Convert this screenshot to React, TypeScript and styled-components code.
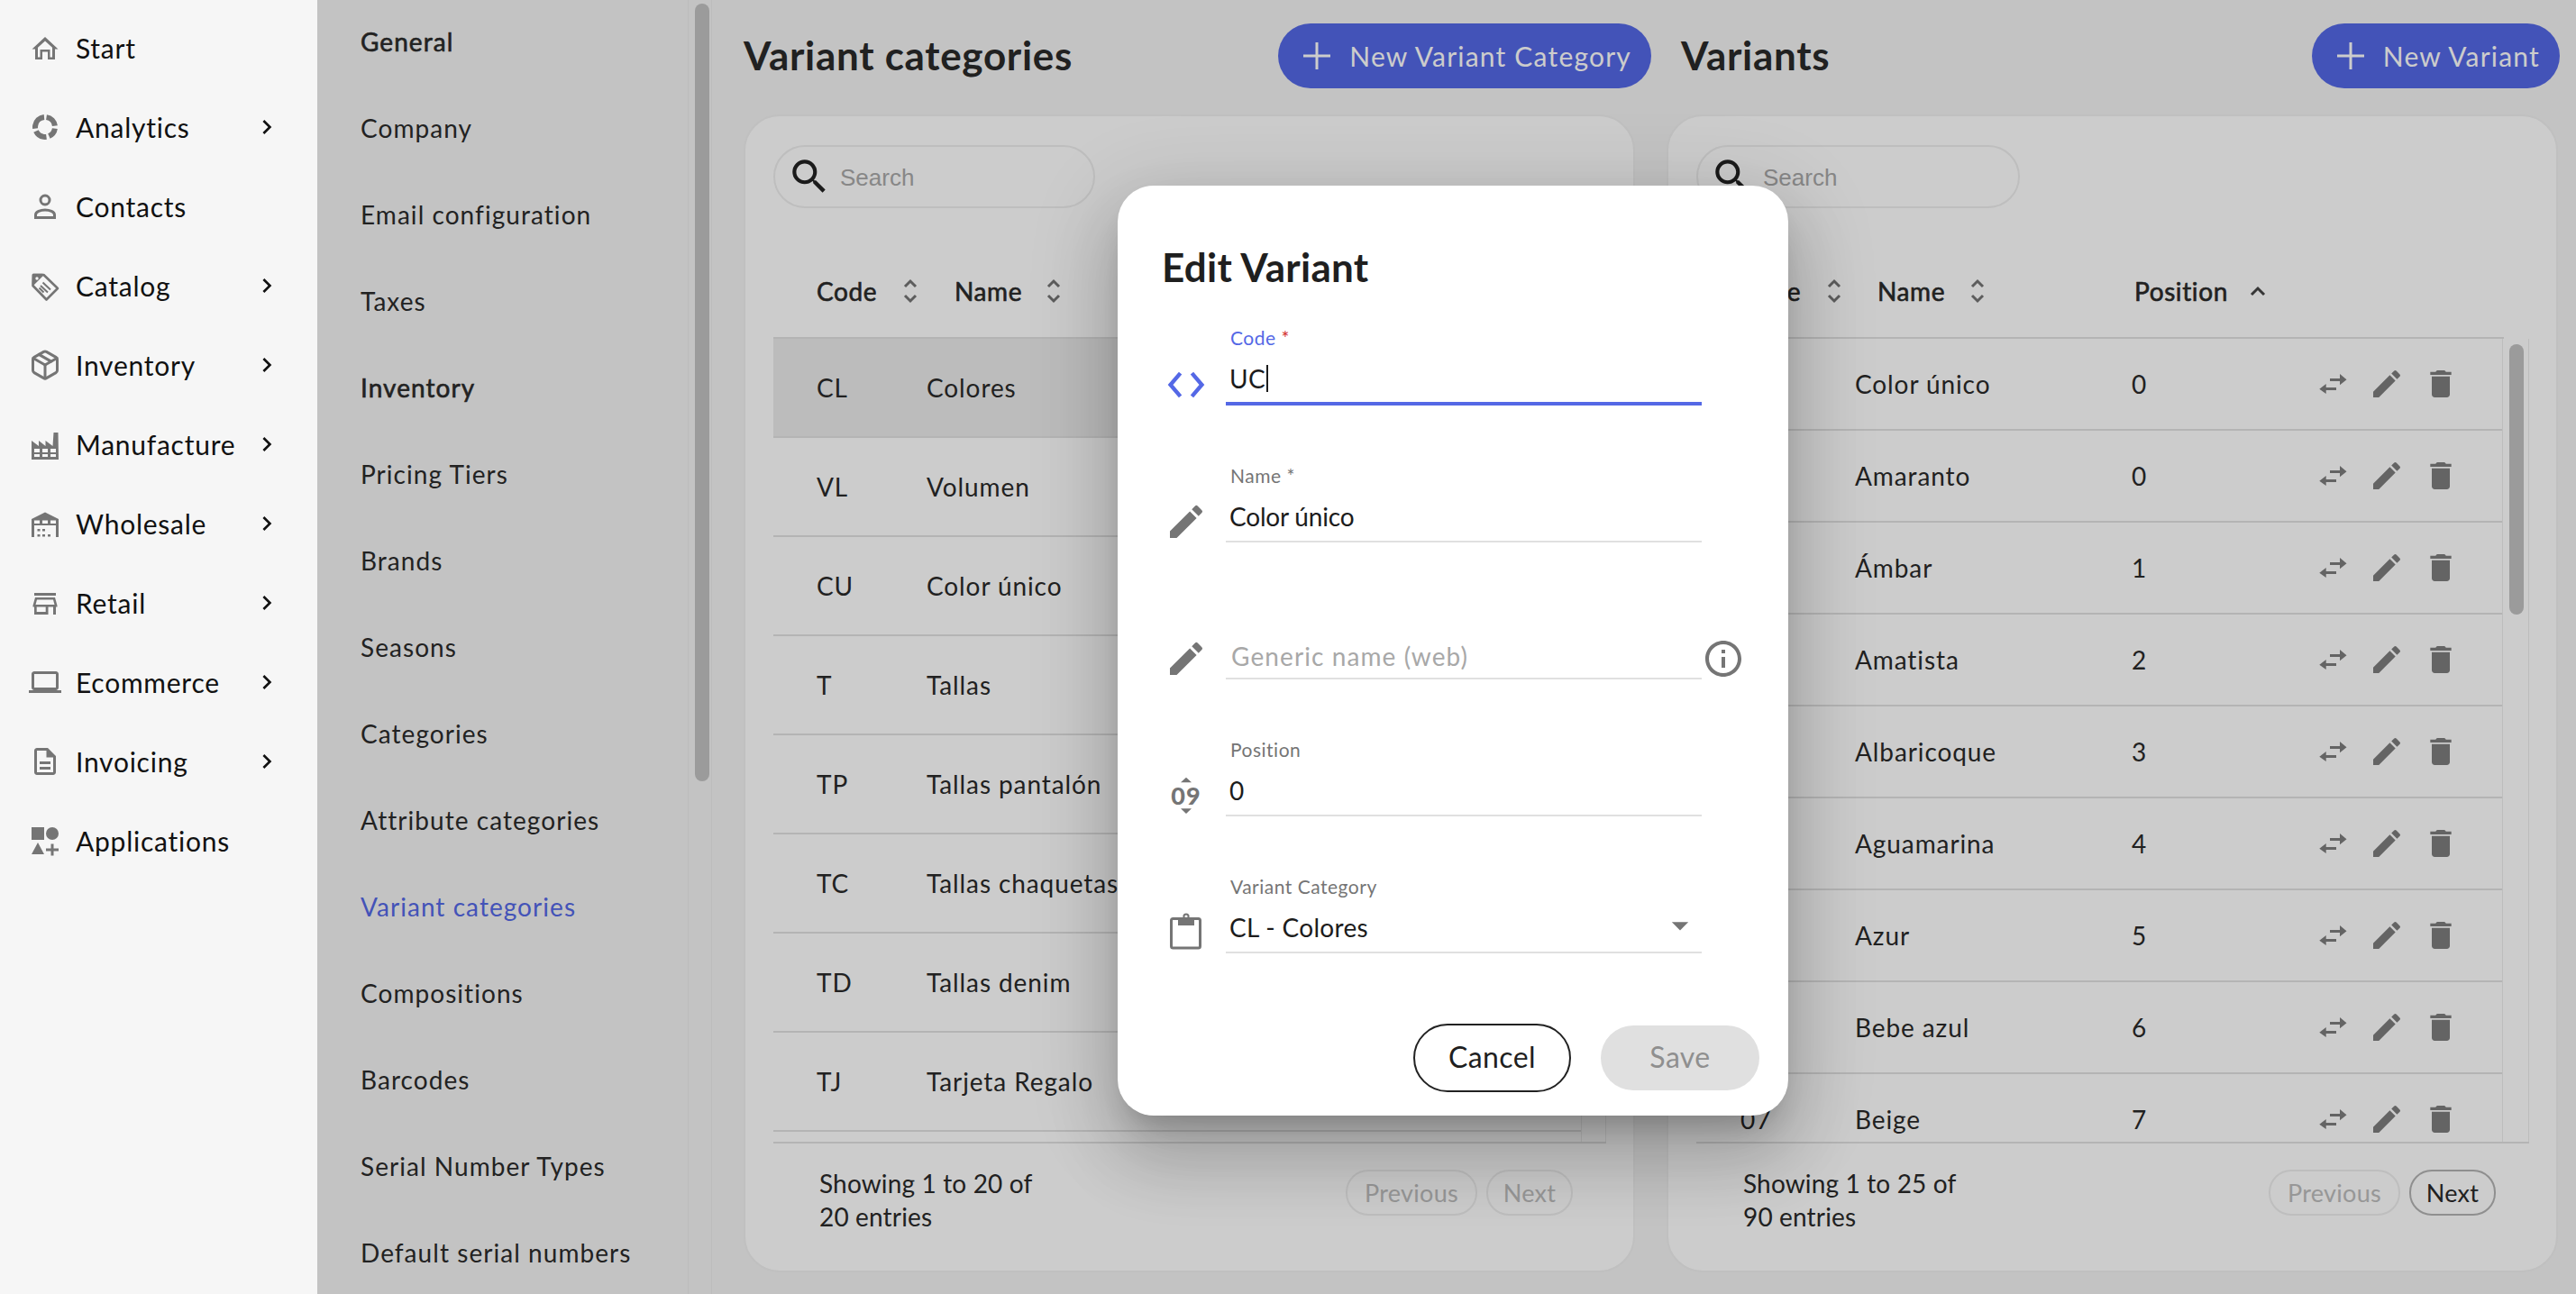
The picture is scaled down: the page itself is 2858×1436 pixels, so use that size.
import React from "react";
import styled, { createGlobalStyle } from "styled-components";
import {
  MdChevronRight, MdSearch, MdEdit, MdDelete, MdInfoOutline, MdOutlineLaptop, MdOutlineDescription, MdArrowDropDown,
} from "react-icons/md";
import { Package } from "lucide-react";

const FONT = `"Lato", "Noto Sans", sans-serif`;

const Global = createGlobalStyle`
  html, body { margin: 0; padding: 0; background: #f6f6f6; }
  * { box-sizing: border-box; }
  body { font-family: ${FONT}; overflow: hidden; }
`;

const Page = styled.div`
  position: relative; display: flex; width: 2858px; height: 1436px; overflow: hidden;
`;

const Sidebar = styled.nav`
  width: 352px; flex: none; padding: 9px 40px 0 32px; background: #f6f6f6;
  display: flex; flex-direction: column;
`;
const NavItem = styled.div`
  height: 88px; display: flex; align-items: center; gap: 16px; color: #111;
  font-size: 30px; letter-spacing: 0.75px;
  svg.lead { width: 36px; height: 36px; color: #757575; flex: none; }
`;
const NavChevron = styled(MdChevronRight)`
  margin-left: auto; width: 32px; height: 32px; color: #111; flex: none;
`;

const SettingsMenu = styled.div`
  width: 411px; flex: none; background: #f4f4f4; padding-left: 48px;
  display: flex; flex-direction: column; gap: 4px;
`;
const MenuItem = styled.div<{ $head?: boolean; $active?: boolean }>`
  height: 92px; display: flex; align-items: center; font-size: 28px; letter-spacing: 1.05px;
  -webkit-text-stroke: ${p => (p.$head ? "0.6px" : "0")} currentColor;
  color: ${p => (p.$active ? "#5468e6" : "#2b2b2b")};
`;
const PageScroll = styled.div`
  width: 27px; flex: none; padding: 4px 0 0 7px; background: #f4f4f4;
  border-left: 1px solid #ebebeb; border-right: 1px solid #ebebeb;
`;
const PageThumb = styled.div`
  width: 16px; height: 863px; border-radius: 8px; background: #c2c2c2;
`;

const Main = styled.main`
  flex: 1; background: #f4f4f4; padding: 26px 20px 0 35px; display: flex; gap: 35px;
`;
const Column = styled.section`
  width: 989px; flex: none; display: flex; flex-direction: column;
`;
const Heading = styled.header<{ $indent: number; $over: number }>`
  height: 72px; display: flex; align-items: center; justify-content: space-between;
  padding-left: ${p => p.$indent}px; margin-right: -${p => p.$over}px; margin-bottom: 29px;
`;
const Title = styled.h1`
  margin: -3px 0 0; font-size: 44px; font-weight: 700; color: #2a2a2a; letter-spacing: 0.7px;
`;
const PrimaryButton = styled.button`
  height: 72px; border: 0; border-radius: 36px; background: #5468e6; color: #fff;
  display: flex; align-items: center; font: 400 30px ${FONT}; letter-spacing: 1.2px;
  padding: 0 22px 0 28px; gap: 21px;
`;
const Card = styled.div`
  height: 1285px; background: #fff; border: 2px solid #f0f0f0; border-radius: 40px;
  padding: 32px 30px 0 31px;
`;
const SearchBox = styled.div<{ $w: number }>`
  width: ${p => p.$w}px; height: 70px; border: 2px solid #eee; border-radius: 35px;
  display: flex; align-items: center; padding-left: 13px; gap: 9px;
  font: 400 26px "Liberation Sans", Arial, sans-serif; color: #a9a9a9;
  svg { width: 50px; height: 50px; color: #222; flex: none; }
`;
const SearchHint = styled.span`
  padding-top: 3px;
`;
const TableHeader = styled.div<{ $left: number }>`
  display: flex; align-items: center; padding: 41px 0 1px ${p => p.$left}px;
  border-bottom: 2px solid #e2e2e2; box-sizing: content-box; height: 101px; margin-right: 28px;
`;
const HeaderCell = styled.div<{ $w: number; $label: number }>`
  width: ${p => p.$w}px; flex: none; display: grid; align-items: center;
  grid-template-columns: ${p => p.$label}px 16px;
  font-size: 28px; -webkit-text-stroke: 0.6px currentColor; color: #2a2a2a; letter-spacing: 0.6px;
`;
const TableBody = styled.div`
  height: 893px; display: flex; border-bottom: 2px solid #e2e2e2;
`;
const Rows = styled.div`
  flex: 1; overflow: hidden;
`;
const Row = styled.div<{ $h: number; $cols: string; $selected?: boolean; $left: number }>`
  height: ${p => p.$h}px; display: grid; align-items: center;
  grid-template-columns: ${p => p.$cols}; padding-left: ${p => p.$left}px;
  border-bottom: 2px solid #e2e2e2; font-size: 28px; letter-spacing: 0.9px; color: #2a2a2a;
  background: ${p => (p.$selected ? "#ececec" : "transparent")};
`;
const RowActions = styled.div`
  display: flex; gap: 20px; color: #7d7d7d;
  svg { width: 40px; height: 40px; flex: none; }
`;
const Track = styled.div<{ $w: number }>`
  width: ${p => p.$w}px; flex: none; border-left: 1px solid #ededed; border-right: 1px solid #ededed;
  padding: 6px 0 0 7px;
`;
const Thumb = styled.div`
  width: 16px; height: 300px; border-radius: 8px; background: #c2c2c2;
`;
const Footer = styled.footer<{ $left: number }>`
  display: flex; justify-content: space-between; padding: 28px 37px 0 ${p => p.$left}px;
`;
const FooterText = styled.div`
  width: 262px; margin-top: -2px; font-size: 28px; line-height: 37px; letter-spacing: 0.15px; color: #2a2a2a;
`;
const Pager = styled.div`
  display: flex; gap: 10px; margin-top: 1px;
`;
const PageButton = styled.button<{ $w: number; $on?: boolean }>`
  width: ${p => p.$w}px; height: 51px; border-radius: 25px; background: transparent; padding: 0;
  border: 2px solid ${p => (p.$on ? "#b3b3b3" : "#eeeeee")};
  color: ${p => (p.$on ? "#2a2a2a" : "#bdbdbd")};
  font: 400 27px ${FONT}; letter-spacing: 0.3px;
`;

const Overlay = styled.div`
  position: absolute; top: 0; bottom: 0; left: 352px; right: 0; background: rgba(0, 0, 0, 0.2);
`;
const Dialog = styled.div`
  position: absolute; left: 1240px; top: 206px; width: 744px; background: #fff; border-radius: 40px;
  padding: 67px 32px 26px 36px;
  box-shadow: 0 22px 30px -14px rgba(0,0,0,.2), 0 48px 76px 6px rgba(0,0,0,.14), 0 18px 92px 16px rgba(0,0,0,.12);
`;
const DialogTitle = styled.h2`
  margin: 0 0 0 13px; height: 48px; line-height: 47px; font-size: 44px; font-weight: 700;
  color: #1f1f1f; letter-spacing: 0.25px;
`;
const Fields = styled.div`
  display: flex; flex-direction: column; gap: 67px; margin-top: 43px;
`;
const Field = styled.div`
  display: grid; grid-template-columns: 80px 528px 40px; column-gap: 4px; align-items: end;
`;
const FieldIcon = styled.div<{ $focus?: boolean }>`
  height: 40px; margin-bottom: 3px; display: flex; align-items: center; justify-content: center;
  color: ${p => (p.$focus ? "#5468e6" : "#757575")};
  svg { width: 44px; height: 44px; flex: none; }
`;
const Pencil = styled(MdEdit)`
  && { width: 48px; height: 48px; }
`;
const InfoMark = styled(MdInfoOutline)`
  && { width: 48px; height: 48px; }
`;
const FieldBody = styled.div``;
const FieldLabel = styled.div<{ $focus?: boolean }>`
  height: 24px; line-height: 24px; margin: -1px 0 11px 5px; font-size: 21px; letter-spacing: 0.5px;
  color: ${p => (p.$focus ? "#5468e6" : "#757575")};
  i { font-style: normal; color: ${p => (p.$focus ? "#d32f2f" : "#757575")}; }
`;
const FieldValue = styled.div<{ $placeholder?: boolean; $track?: number }>`
  height: 44px; display: flex; align-items: center; padding: ${p => (p.$placeholder ? "6px 0 0 6px" : "0 0 0 4px")};
  font-size: 28px; letter-spacing: ${p => p.$track ?? 0.3}px; color: ${p => (p.$placeholder ? "#a8a8a8" : "#1c1c1c")};
  position: relative;
`;
const Caret = styled.span`
  display: inline-block; width: 2px; height: 30px; background: #1c1c1c; margin-left: 1px;
`;
const SelectArrow = styled(MdArrowDropDown)`
  position: absolute; right: 0; top: -2px; width: 48px; height: 44px; color: #757575;
`;
const FieldLine = styled.div<{ $focus?: boolean }>`
  height: ${p => (p.$focus ? 4 : 2)}px; margin-top: ${p => (p.$focus ? 4 : 5)}px;
  background: ${p => (p.$focus ? "#5468e6" : "#e0e0e0")};
`;
const Actions = styled.div`
  display: flex; justify-content: flex-end; align-items: center; gap: 33px; margin-top: 78px;
`;
const CancelButton = styled.button`
  width: 175px; height: 76px; border: 2px solid #222; border-radius: 38px; background: #fff;
  font: 400 32px ${FONT}; letter-spacing: 0.4px; color: #1f1f1f; padding: 0 0 3px;
`;
const SaveButton = styled.button`
  width: 176px; height: 72px; border: 0; border-radius: 36px; background: #e0e0e0;
  font: 400 32px ${FONT}; letter-spacing: 0.4px; color: #8f8f8f; padding: 0 0 3px;
`;

const Plus = () => (
  <svg width="30" height="30" viewBox="0 0 30 30" fill="none" stroke="currentColor" strokeWidth="3">
    <path d="M15 0 V30 M0 15 H30" />
  </svg>
);
const Sort = () => (
  <svg width="16" height="28" viewBox="0 0 16 28" fill="none" stroke="#757575" strokeWidth="3">
    <path d="M2 9 L8 3 L14 9" /><path d="M2 19 L8 25 L14 19" />
  </svg>
);
const SortUp = () => (
  <svg width="18" height="28" viewBox="0 0 18 28" fill="none" stroke="#444" strokeWidth="3">
    <path d="M2 18 L9 11 L16 18" />
  </svg>
);
const HomeIcon = () => (
  <svg className="lead" viewBox="0 0 36 36" fill="currentColor" fillRule="evenodd">
    <path d="M18 6 L3.5 19.5 H7 V31 H15 V22.5 H21 V31 H29 V19.5 H32.5 Z M18 10.5 L10 17.8 V28.5 H12.5 V20 H23.5 V28.5 H26 V17.8 Z" />
  </svg>
);
const Donut = () => (
  <svg className="lead" viewBox="0 0 36 36" fill="none" stroke="currentColor" strokeWidth="6">
    <circle cx="18" cy="18" r="11" strokeDasharray="14.3 3 11 3 14 3 17.8 3" transform="rotate(-82 18 18)" />
  </svg>
);
const PersonIcon = () => (
  <svg className="lead" viewBox="0 0 36 36" fill="none" stroke="currentColor" strokeWidth="3">
    <circle cx="18" cy="11" r="5" />
    <path d="M7.5 30.5 V27.5 C7.5 24 13 22 18 22 S28.5 24 28.5 27.5 V30.5 Z" />
  </svg>
);
const TagIcon = () => (
  <svg className="lead" viewBox="0 0 36 36" fill="none" stroke="currentColor" strokeWidth="2.6" strokeLinejoin="round">
    <path d="M5 6 H16.5 L32 21 L19.5 33.5 L4.5 18 Z" />
    <path d="M5 6 H15 L5 16 Z" fill="currentColor" />
    <circle cx="9" cy="10" r="1.7" fill="#f6f6f6" stroke="none" />
    <path d="M15.5 14.5 L24 22.5 M13 18 L21 25.5 M11.5 20.5 L16.5 25.5" strokeWidth="2" />
  </svg>
);
const FactoryIcon = () => (
  <svg className="lead" viewBox="0 0 36 36" fill="currentColor" fillRule="evenodd">
    <path d="M3 14 L11 20 V14 L18.5 20 V14 L26.5 20 L27.5 5 H32.5 L33 35 H3 Z M6 23 V27 H12 V23 Z M15 23 V27 H21 V23 Z M24 23 V27 H30 V23 Z M6 29 V32 H12 V29 Z M15 29 V32 H21 V29 Z M24 29 V32 H30 V29 Z" />
  </svg>
);
const WarehouseIcon = () => (
  <svg className="lead" viewBox="0 0 36 36" fill="currentColor" fillRule="evenodd">
    <path d="M18 5.5 L33 13 V33 H30 V20 H6 V33 H3 V13 Z M6 14.5 V18 H12 V14.5 Z M15 14.5 V18 H21 V14.5 Z M24 14.5 V18 H30 V14.5 Z" />
    <path d="M9.5 24 H12.5 V26.5 H9.5 Z M15 24 H18 V26.5 H15 Z M9.5 30 H12.5 V32.5 H9.5 Z M15 30 H18 V32.5 H15 Z M21 30 H24 V32.5 H21 Z" />
  </svg>
);
const StoreIcon = () => (
  <svg className="lead" viewBox="0 0 36 36" fill="currentColor" fillRule="evenodd">
    <path d="M6 7 H30 V10 H6 Z" />
    <path d="M7 12 H29 L31.5 21 V22.5 H4.5 V21 Z M9 14.5 L7.5 20 H28.5 L27 14.5 Z" />
    <path d="M6 21 H30 V31 H27 V21 H21.5 V31 H6 Z M8.7 22 V28 H18.7 V22 Z" />
  </svg>
);
const AppsIcon = () => (
  <svg className="lead" viewBox="0 0 36 36" fill="currentColor">
    <rect x="3" y="3" width="14" height="14" />
    <circle cx="26" cy="10" r="7" />
    <path d="M10 20 L17 33 H3 Z" />
    <path d="M24.5 21.5 h3 v5 h5.5 v3 h-5.5 v5 h-3 v-5 h-5.5 v-3 h5.5 z" />
  </svg>
);
const CodeGlyph = () => (
  <svg viewBox="0 0 24 24" fill="none" stroke="currentColor" strokeWidth="2.4">
    <path d="M8.5 5 L2.5 12 L8.5 19" /><path d="M15.5 5 L21.5 12 L15.5 19" />
  </svg>
);
const Digits = () => (
  <svg viewBox="0 0 44 44" fill="currentColor">
    <path d="M22 1.7 L28 7.3 H16 Z" /><path d="M22 42 L28 36.3 H16 Z" />
    <text x="22" y="31.5" textAnchor="middle" fontFamily="Lato, sans-serif" fontWeight="900" fontSize="27" letterSpacing="1">09</text>
  </svg>
);
const ClipboardIcon = () => (
  <svg viewBox="0 0 44 44" fill="none" stroke="currentColor">
    <rect x="5.5" y="6.5" width="32" height="32.5" rx="2" strokeWidth="3" />
    <path d="M13 5 H31 V14 H13 Z" fill="currentColor" stroke="none" />
    <circle cx="22" cy="4" r="2.6" strokeWidth="2" />
  </svg>
);
const SwapIcon = () => (
  <svg viewBox="0 0 40 40" fill="currentColor">
    <path d="M17 14 H28 V9 L35.5 15.3 L28 21.3 V17 H17 Z" />
    <path d="M24 24 H12.7 V20 L5.3 25.7 L12.7 31 V27 H24 Z" />
  </svg>
);

const nav: [string, React.ReactNode, boolean][] = [
  ["Start", <HomeIcon />, false],
  ["Analytics", <Donut />, true],
  ["Contacts", <PersonIcon />, false],
  ["Catalog", <TagIcon />, true],
  ["Inventory", <Package className="lead" strokeWidth={2} />, true],
  ["Manufacture", <FactoryIcon />, true],
  ["Wholesale", <WarehouseIcon />, true],
  ["Retail", <StoreIcon />, true],
  ["Ecommerce", <MdOutlineLaptop className="lead" />, true],
  ["Invoicing", <MdOutlineDescription className="lead" />, true],
  ["Applications", <AppsIcon />, false],
];
const menu = ["General", "Company", "Email configuration", "Taxes", "Inventory", "Pricing Tiers", "Brands", "Seasons",
  "Categories", "Attribute categories", "Variant categories", "Compositions", "Barcodes", "Serial Number Types", "Default serial numbers"];
const cats = [["CL", "Colores"], ["VL", "Volumen"], ["CU", "Color único"], ["T", "Tallas"], ["TP", "Tallas pantalón"],
  ["TC", "Tallas chaquetas"], ["TD", "Tallas denim"], ["TJ", "Tarjeta Regalo"]];
const variants = [["UC", "Color único", "0"], ["00", "Amaranto", "0"], ["01", "Ámbar", "1"], ["02", "Amatista", "2"],
  ["03", "Albaricoque", "3"], ["04", "Aguamarina", "4"], ["05", "Azur", "5"], ["06", "Bebe azul", "6"], ["07", "Beige", "7"]];

export default function App() {
  return (
    <Page>
      <Global />
      <Sidebar>
        {nav.map(([label, icon, more]) => (
          <NavItem key={label}>{icon}{label}{more && <NavChevron />}</NavItem>
        ))}
      </Sidebar>
      <SettingsMenu>
        {menu.map(m => (
          <MenuItem key={m} $head={m === "General" || m === "Inventory"} $active={m === "Variant categories"}>{m}</MenuItem>
        ))}
      </SettingsMenu>
      <PageScroll><PageThumb /></PageScroll>
      <Main>
        <Column>
          <Heading $indent={0} $over={18}>
            <Title>Variant categories</Title>
            <PrimaryButton><Plus />New Variant Category</PrimaryButton>
          </Heading>
          <Card>
            <SearchBox $w={357}><MdSearch /><SearchHint>Search</SearchHint></SearchBox>
            <TableHeader $left={48}>
              <HeaderCell $w={153} $label={96}>Code<Sort /></HeaderCell>
              <HeaderCell $w={130} $label={102}>Name<Sort /></HeaderCell>
            </TableHeader>
            <TableBody>
              <Rows>
                {cats.map(([c, n], i) => (
                  <Row key={c} $h={110} $left={48} $cols="122px 1fr" $selected={i === 0}><span>{c}</span><span>{n}</span></Row>
                ))}
              </Rows>
              <Track $w={28} />
            </TableBody>
            <Footer $left={51}>
              <FooterText>Showing 1 to 20 of 20 entries</FooterText>
              <Pager>
                <PageButton $w={146}>Previous</PageButton>
                <PageButton $w={96}>Next</PageButton>
              </Pager>
            </Footer>
          </Card>
        </Column>
        <Column>
          <Heading $indent={16} $over={2}>
            <Title>Variants</Title>
            <PrimaryButton><Plus />New Variant</PrimaryButton>
          </Heading>
          <Card>
            <SearchBox $w={359}><MdSearch /><SearchHint>Search</SearchHint></SearchBox>
            <TableHeader $left={49}>
              <HeaderCell $w={152} $label={96}>Code<Sort /></HeaderCell>
              <HeaderCell $w={285} $label={103}>Name<Sort /></HeaderCell>
              <HeaderCell $w={150} $label={128}>Position<SortUp /></HeaderCell>
            </TableHeader>
            <TableBody>
              <Rows>
                {variants.map(([c, n, p]) => (
                  <Row key={c} $h={102} $left={49} $cols="127px 307px 203px 1fr">
                    <span>{c}</span><span>{n}</span><span>{p}</span>
                    <RowActions><SwapIcon /><MdEdit /><MdDelete /></RowActions>
                  </Row>
                ))}
              </Rows>
              <Track $w={30}><Thumb /></Track>
            </TableBody>
            <Footer $left={52}>
              <FooterText>Showing 1 to 25 of 90 entries</FooterText>
              <Pager>
                <PageButton $w={146}>Previous</PageButton>
                <PageButton $w={96} $on>Next</PageButton>
              </Pager>
            </Footer>
          </Card>
        </Column>
      </Main>
      <Overlay />
      <Dialog>
        <DialogTitle>Edit Variant</DialogTitle>
        <Fields>
          <Field>
            <FieldIcon $focus><CodeGlyph /></FieldIcon>
            <FieldBody>
              <FieldLabel $focus>Code <i>*</i></FieldLabel>
              <FieldValue>UC<Caret /></FieldValue>
              <FieldLine $focus />
            </FieldBody>
          </Field>
          <Field>
            <FieldIcon><Pencil /></FieldIcon>
            <FieldBody>
              <FieldLabel>Name <i>*</i></FieldLabel>
              <FieldValue $track={-0.2}>Color único</FieldValue>
              <FieldLine />
            </FieldBody>
          </Field>
          <Field>
            <FieldIcon><Pencil /></FieldIcon>
            <FieldBody>
              <FieldLabel />
              <FieldValue $placeholder $track={1.1}>Generic name (web)</FieldValue>
              <FieldLine />
            </FieldBody>
            <FieldIcon><InfoMark /></FieldIcon>
          </Field>
          <Field>
            <FieldIcon><Digits /></FieldIcon>
            <FieldBody>
              <FieldLabel>Position</FieldLabel>
              <FieldValue>0</FieldValue>
              <FieldLine />
            </FieldBody>
          </Field>
          <Field>
            <FieldIcon><ClipboardIcon /></FieldIcon>
            <FieldBody>
              <FieldLabel>Variant Category</FieldLabel>
              <FieldValue>CL - Colores<SelectArrow /></FieldValue>
              <FieldLine />
            </FieldBody>
          </Field>
        </Fields>
        <Actions>
          <CancelButton>Cancel</CancelButton>
          <SaveButton>Save</SaveButton>
        </Actions>
      </Dialog>
    </Page>
  );
}
